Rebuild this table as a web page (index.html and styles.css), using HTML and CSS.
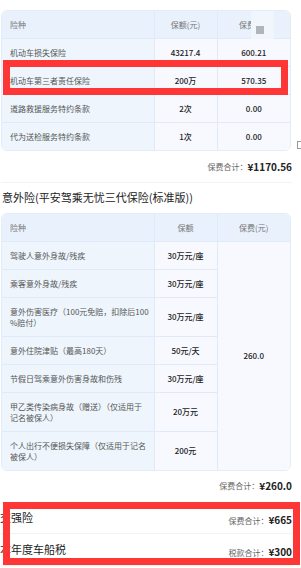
FILE: index.html
```html
<!DOCTYPE html>
<html lang="zh-CN">
<head>
<meta charset="utf-8">
<link rel="stylesheet" href="styles.css">
</head>
<body>
<div class="page">
  <div class="table-wrap t1">
    <table class="ins">
      <colgroup><col class="c1"><col class="c2"><col class="c3"></colgroup>
      <thead>
        <tr><th class="l">险种</th><th>保额(元)</th><th>保费(元)</th></tr>
      </thead>
      <tbody>
        <tr><td class="l">机动车损失保险</td><td class="v">43217.4</td><td class="v">600.21</td></tr>
        <tr><td class="l">机动车第三者责任保险</td><td class="v">200万</td><td class="v">570.35</td></tr>
        <tr><td class="l">道路救援服务特约条款</td><td class="v">2次</td><td class="v">0.00</td></tr>
        <tr><td class="l">代为送检服务特约条款</td><td class="v">1次</td><td class="v">0.00</td></tr>
      </tbody>
    </table>
    <div class="float-box"><span class="float-dot"></span></div>
  </div>
  <div class="sum"><span class="sum-label">保费合计：</span><span class="sum-val">¥1170.56</span></div>

  <h2 class="title">意外险(平安驾乘无忧三代保险(标准版))</h2>
  <div class="table-wrap t2">
    <table class="ins">
      <colgroup><col class="c1"><col class="c2"><col class="c3"></colgroup>
      <thead>
        <tr><th class="l">险种</th><th>保额</th><th>保费(元)</th></tr>
      </thead>
      <tbody>
        <tr><td class="l">驾驶人意外身故/残疾</td><td class="v">30万元/座</td><td class="v merged" rowspan="7">260.0</td></tr>
        <tr><td class="l">乘客意外身故/残疾</td><td class="v">30万元/座</td></tr>
        <tr><td class="l">意外伤害医疗（100元免赔，扣除后100<br>%赔付）</td><td class="v">30万元/座</td></tr>
        <tr><td class="l">意外住院津贴（最高180天）</td><td class="v">50元/天</td></tr>
        <tr><td class="l">节假日驾乘意外伤害身故和伤残</td><td class="v">30万元/座</td></tr>
        <tr><td class="l">甲乙类传染病身故（赠送）（仅适用于<br>记名被保人）</td><td class="v">20万元</td></tr>
        <tr><td class="l">个人出行不便损失保障（仅适用于记名<br>被保人）</td><td class="v">200元</td></tr>
      </tbody>
    </table>
  </div>
  <div class="sum sum2"><span class="sum-label">保费合计：</span><span class="sum-val">¥260.0</span></div>

  <div class="line-item first"><span class="li-name">交强险</span><span><span class="sum-label">保费合计：</span><span class="sum-val">¥665</span></span></div>
  <div class="line-item"><span class="li-name">本年度车船税</span><span><span class="sum-label">税款合计：</span><span class="sum-val">¥300</span></span></div>
</div>
<span class="edge-mark"></span>
<div class="mark mark1"></div>
<div class="mark mark2"></div>
</body>
</html>
```
FILE: styles.css
```css
* { box-sizing: border-box; }
html, body { margin: 0; padding: 0; background: #fff; }
body {
  font-family: "Noto Sans CJK SC", "Noto Sans", sans-serif;
  color: #333;
  width: 301px;
  height: 568px;
  overflow: hidden;
  position: relative;
}
.page { padding: 10px 9px 0 1px; }

.table-wrap {
  position: relative;
  border: 1px solid #e3ecf8;
  border-radius: 6px;
  overflow: hidden;
  width: 290px;
}
.ins {
  width: 100%;
  border-collapse: collapse;
  table-layout: fixed;
  font-size: 8px;
}
.c1 { width: 152px; }
.c2 { width: 63px; }
.c3 { width: 73px; }
.ins th {
  background: #e9f1fc;
  color: #777;
  font-weight: normal;
  height: 27px;
  line-height: 11px;
  padding: 0 8px;
  text-align: center;
  border-left: 1px solid #dfe9f7;
}
.ins th.l { text-align: left; border-left: 0; }
.ins td {
  padding: 8px 4px;
  line-height: 11px;
  border-top: 1px solid #e0eaf8;
  border-left: 1px solid #e0eaf8;
  background: #f7f9fe;
  text-align: center;
  white-space: nowrap;
}
.ins td.l {
  text-align: left;
  background: #eef5fd;
  color: #555;
  border-left: 0;
  padding-left: 8px;
  padding-right: 0;
}
.ins td.v { color: #222; font-weight: 500; }
.t1 .ins td { height: 28px; }
.ins td.merged { vertical-align: middle; }

.float-box {
  position: absolute;
  left: 249px;
  top: -3px;
  width: 23px;
  height: 31px;
  background: #f1f6fd;
}
.float-dot {
  position: absolute;
  left: 5px;
  top: 18px;
  width: 8px;
  height: 8px;
  background: #b1b4b9;
}

.sum {
  display: flex;
  justify-content: flex-end;
  align-items: center;
  height: 32px;
  border-bottom: 1px solid #f3f3f3;
}
.sum2 { height: 30px; border-bottom: 0; }
.sum-label { font-size: 8px; color: #666; }
.sum-val { font-size: 10px; font-weight: bold; color: #222; }

.title {
  margin: 0;
  font-size: 11px;
  font-weight: normal;
  color: #222;
  line-height: 14px;
  padding: 7px 0 9px 1px;
}

.line-item {
  display: flex;
  justify-content: space-between;
  align-items: center;
  height: 32px;
  margin-left: -1px;
  padding-right: 0;
  border-bottom: 1px solid #f3f3f3;
}
.line-item.first { margin-top: 1px; }
.li-name { font-size: 11px; color: #222; }

.edge-mark {
  position: absolute;
  left: 297px;
  top: 141px;
  width: 6px;
  height: 8px;
  border: 1px solid #999;
}

.mark {
  position: absolute;
  border: 7px solid #fe3636;
}
.mark1 { left: 3px; top: 60px; width: 285px; height: 35px; }
.mark2 { left: 3px; top: 502px; width: 297px; height: 63px; }
```
